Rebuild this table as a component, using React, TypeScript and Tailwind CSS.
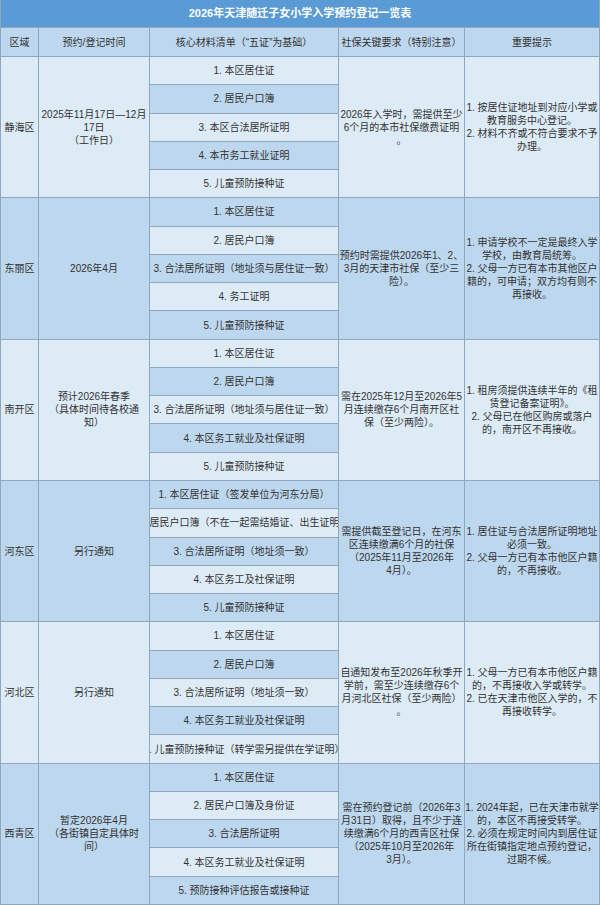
import React from "react";

type Block = {
  area: string;
  time: string[];
  materials: string[];
  social: string[];
  tips: string[];
};

const blocks: Block[] = [
  {
    area: "静海区",
    time: ["2025年11月17日—12月", "17日", "（工作日）"],
    materials: [
      "1. 本区居住证",
      "2. 居民户口簿",
      "3. 本区合法居所证明",
      "4. 本市务工就业证明",
      "5. 儿童预防接种证",
    ],
    social: ["2026年入学时，需提供至少", "6个月的本市社保缴费证明", "。"],
    tips: [
      "1. 按居住证地址到对应小学或",
      "教育服务中心登记。",
      "2. 材料不齐或不符合要求不予",
      "办理。",
    ],
  },
  {
    area: "东丽区",
    time: ["2026年4月"],
    materials: [
      "1. 本区居住证",
      "2. 居民户口簿",
      "3. 合法居所证明（地址须与居住证一致）",
      "4. 务工证明",
      "5. 儿童预防接种证",
    ],
    social: ["预约时需提供2026年1、2、", "3月的天津市社保（至少三", "险）。"],
    tips: [
      "1. 申请学校不一定是最终入学",
      "学校，由教育局统筹。",
      "2. 父母一方已有本市其他区户",
      "籍的，可申请；双方均有则不",
      "再接收。",
    ],
  },
  {
    area: "南开区",
    time: ["预计2026年春季", "（具体时间待各校通", "知）"],
    materials: [
      "1. 本区居住证",
      "2. 居民户口簿",
      "3. 合法居所证明（地址须与居住证一致）",
      "4. 本区务工就业及社保证明",
      "5. 儿童预防接种证",
    ],
    social: ["需在2025年12月至2026年5", "月连续缴存6个月南开区社", "保（至少两险）。"],
    tips: [
      "1. 租房须提供连续半年的《租",
      "赁登记备案证明》。",
      "2. 父母已在他区购房或落户",
      "的，南开区不再接收。",
    ],
  },
  {
    area: "河东区",
    time: ["另行通知"],
    materials: [
      "1. 本区居住证（签发单位为河东分局）",
      "2. 居民户口簿（不在一起需结婚证、出生证明）",
      "3. 合法居所证明（地址须一致）",
      "4. 本区务工及社保证明",
      "5. 儿童预防接种证",
    ],
    social: [
      "需提供截至登记日，在河东",
      "区连续缴满6个月的社保",
      "（2025年11月至2026年",
      "4月）。",
    ],
    tips: [
      "1. 居住证与合法居所证明地址",
      "必须一致。",
      "2. 父母一方已有本市他区户籍",
      "的，不再接收。",
    ],
  },
  {
    area: "河北区",
    time: ["另行通知"],
    materials: [
      "1. 本区居住证",
      "2. 居民户口簿",
      "3. 合法居所证明（地址须一致）",
      "4. 本区务工就业及社保证明",
      "5. 儿童预防接种证（转学需另提供在学证明）",
    ],
    social: [
      "自通知发布至2026年秋季开",
      "学前，需至少连续缴存6个",
      "月河北区社保（至少两险）",
      "。",
    ],
    tips: [
      "1. 父母一方已有本市他区户籍",
      "的，不再接收入学或转学。",
      "2. 已在天津市他区入学的，不",
      "再接收转学。",
    ],
  },
  {
    area: "西青区",
    time: ["暂定2026年4月", "（各街镇自定具体时", "间）"],
    materials: [
      "1. 本区居住证",
      "2. 居民户口簿及身份证",
      "3. 合法居所证明",
      "4. 本区务工就业及社保证明",
      "5. 预防接种评估报告或接种证",
    ],
    social: [
      "需在预约登记前（2026年3",
      "月31日）取得，且不少于连",
      "续缴满6个月的西青区社保",
      "（2025年10月至2026年",
      "3月）。",
    ],
    tips: [
      "1. 2024年起，已在天津市就学",
      "的，本区不再接受转学。",
      "2. 必须在规定时间内到居住证",
      "所在街镇指定地点预约登记，",
      "过期不候。",
    ],
  },
];

function Lines({ lines }: { lines: string[] }) {
  return (
    <div className="flex flex-col items-center text-center">
      {lines.map((l, i) => (
        <span key={i} className="whitespace-nowrap">
          {l}
        </span>
      ))}
    </div>
  );
}

export default function App() {
  return (
    <div className="w-[600px] h-[905px] flex flex-col bg-white border-l border-[#8fa7bd] font-['Liberation_Sans','Noto_Sans_CJK_SC',sans-serif] text-[10px] leading-[13px] text-[#333]">
      <div className="h-[28px] shrink-0 flex items-center justify-center bg-[#5b9bd5] border-r border-b border-[#8fa7bd] text-white text-[11px] font-bold">
        2026年天津随迁子女小学入学预约登记一览表
      </div>

      <div className="h-[29px] shrink-0 grid grid-cols-[38px_111px_189px_126px_135px] bg-[#bdd7ee]">
        <div className="flex items-center justify-center border-r border-b border-[#8fa7bd]">区域</div>
        <div className="flex items-center justify-center border-r border-b border-[#8fa7bd]">预约/登记时间</div>
        <div className="flex items-center justify-center border-r border-b border-[#8fa7bd] whitespace-nowrap">
          核心材料清单（“五证”为基础）
        </div>
        <div className="flex items-center justify-center border-r border-b border-[#8fa7bd] whitespace-nowrap">
          社保关键要求（特别注意）
        </div>
        <div className="flex items-center justify-center border-r border-b border-[#8fa7bd]">重要提示</div>
      </div>

      {blocks.map((b, bi) => {
        const bg = bi % 2 === 0 ? "bg-[#ddebf7]" : "bg-[#bdd7ee]";
        return (
          <div
            key={b.area}
            className={`flex-1 min-h-0 grid grid-cols-[38px_111px_189px_126px_135px] ${bg}`}
          >
            <div className="flex items-center justify-center border-r border-b border-[#8fa7bd]">
              {b.area}
            </div>
            <div className="flex items-center justify-center border-r border-b border-[#8fa7bd] overflow-hidden">
              <Lines lines={b.time} />
            </div>
            <div className="flex flex-col border-r border-[#8fa7bd]">
              {b.materials.map((m, mi) => {
                const idx = bi * 5 + mi;
                return (
                  <div
                    key={m}
                    className={`flex-1 flex items-center justify-center overflow-hidden whitespace-nowrap border-b border-[#8fa7bd] ${
                      idx % 2 === 0 ? "bg-[#ddebf7]" : "bg-[#bdd7ee]"
                    }`}
                  >
                    <span className="shrink-0">{m}</span>
                  </div>
                );
              })}
            </div>
            <div className="flex items-center justify-center border-r border-b border-[#8fa7bd] overflow-hidden">
              <Lines lines={b.social} />
            </div>
            <div className="flex items-center justify-center border-r border-b border-[#8fa7bd] overflow-hidden">
              <Lines lines={b.tips} />
            </div>
          </div>
        );
      })}
    </div>
  );
}
